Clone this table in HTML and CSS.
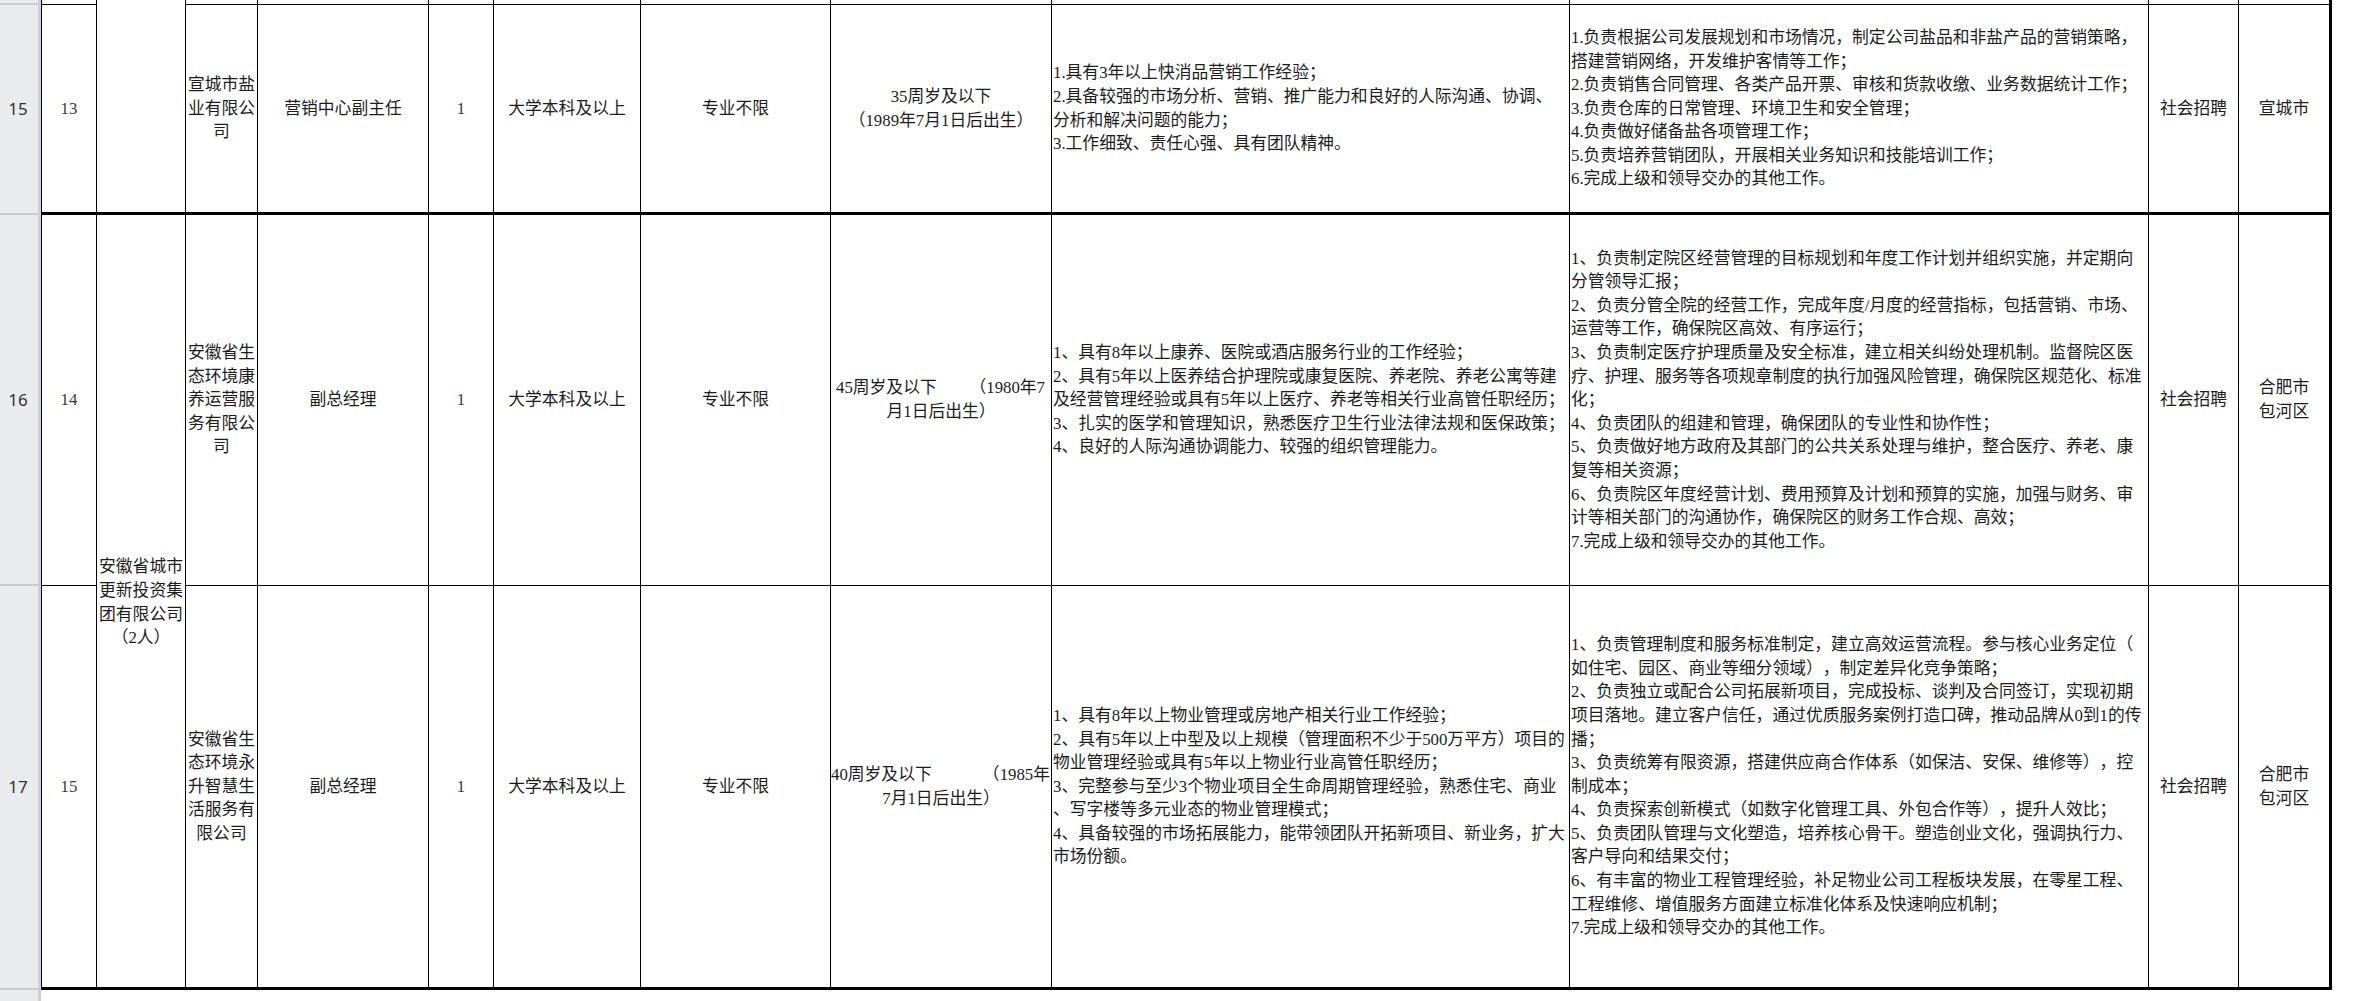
FILE: index.html
```html
<!DOCTYPE html>
<html lang="zh-CN">
<head>
<meta charset="utf-8">
<title>招聘岗位表</title>
<link rel="stylesheet" href="styles.css">
</head>
<body>
<div class="sheet">
  <!-- tail of previous row -->
  <div class="rh"></div>
  <div class="c first"></div>
  <div class="c merged-top thick"></div>
  <div class="c"></div>
  <div class="c"></div>
  <div class="c"></div>
  <div class="c"></div>
  <div class="c"></div>
  <div class="c"></div>
  <div class="c"></div>
  <div class="c"></div>
  <div class="c"></div>
  <div class="c last"></div>
  <div class="pad"></div>

  <!-- row 15 -->
  <div class="rh">15</div>
  <div class="c first thick num">13</div>
  <div class="c thick"><div>宣城市盐</div><div>业有限公</div><div>司</div></div>
  <div class="c thick">营销中心副主任</div>
  <div class="c thick num">1</div>
  <div class="c thick">大学本科及以上</div>
  <div class="c thick">专业不限</div>
  <div class="c thick"><div class="ln">35周岁及以下</div><div class="ln">（1989年7月1日后出生）</div></div>
  <div class="c thick left">
    <div class="ln">1.具有3年以上快消品营销工作经验；</div>
    <div class="ln">2.具备较强的市场分析、营销、推广能力和良好的人际沟通、协调、</div>
    <div class="ln">分析和解决问题的能力；</div>
    <div class="ln">3.工作细致、责任心强、具有团队精神。</div>
  </div>
  <div class="c thick left">
    <div class="ln">1.负责根据公司发展规划和市场情况，制定公司盐品和非盐产品的营销策略，</div>
    <div class="ln">搭建营销网络，开发维护客情等工作；</div>
    <div class="ln">2.负责销售合同管理、各类产品开票、审核和货款收缴、业务数据统计工作；</div>
    <div class="ln">3.负责仓库的日常管理、环境卫生和安全管理；</div>
    <div class="ln">4.负责做好储备盐各项管理工作；</div>
    <div class="ln">5.负责培养营销团队，开展相关业务知识和技能培训工作；</div>
    <div class="ln">6.完成上级和领导交办的其他工作。</div>
  </div>
  <div class="c thick">社会招聘</div>
  <div class="c thick last">宣城市</div>
  <div class="pad"></div>

  <!-- row 16 -->
  <div class="rh">16</div>
  <div class="c first num">14</div>
  <div class="c group thick"><div>安徽省城市</div><div>更新投资集</div><div>团有限公司</div><div>（2人）</div></div>
  <div class="c"><div>安徽省生</div><div>态环境康</div><div>养运营服</div><div>务有限公</div><div>司</div></div>
  <div class="c">副总经理</div>
  <div class="c num">1</div>
  <div class="c">大学本科及以上</div>
  <div class="c">专业不限</div>
  <div class="c age age-a"><div class="split"><span>45周岁及以下</span><span>（1980年7</span></div><div class="ln">月1日后出生）</div></div>
  <div class="c left">
    <div class="ln">1、具有8年以上康养、医院或酒店服务行业的工作经验；</div>
    <div class="ln">2、具有5年以上医养结合护理院或康复医院、养老院、养老公寓等建</div>
    <div class="ln">及经营管理经验或具有5年以上医疗、养老等相关行业高管任职经历；</div>
    <div class="ln">3、扎实的医学和管理知识，熟悉医疗卫生行业法律法规和医保政策；</div>
    <div class="ln">4、良好的人际沟通协调能力、较强的组织管理能力。</div>
  </div>
  <div class="c left">
    <div class="ln">1、负责制定院区经营管理的目标规划和年度工作计划并组织实施，并定期向</div>
    <div class="ln">分管领导汇报；</div>
    <div class="ln">2、负责分管全院的经营工作，完成年度/月度的经营指标，包括营销、市场、</div>
    <div class="ln">运营等工作，确保院区高效、有序运行；</div>
    <div class="ln">3、负责制定医疗护理质量及安全标准，建立相关纠纷处理机制。监督院区医</div>
    <div class="ln">疗、护理、服务等各项规章制度的执行加强风险管理，确保院区规范化、标准</div>
    <div class="ln">化；</div>
    <div class="ln">4、负责团队的组建和管理，确保团队的专业性和协作性；</div>
    <div class="ln">5、负责做好地方政府及其部门的公共关系处理与维护，整合医疗、养老、康</div>
    <div class="ln">复等相关资源；</div>
    <div class="ln">6、负责院区年度经营计划、费用预算及计划和预算的实施，加强与财务、审</div>
    <div class="ln">计等相关部门的沟通协作，确保院区的财务工作合规、高效；</div>
    <div class="ln">7.完成上级和领导交办的其他工作。</div>
  </div>
  <div class="c">社会招聘</div>
  <div class="c last"><div>合肥市</div><div>包河区</div></div>
  <div class="pad"></div>

  <!-- row 17 -->
  <div class="rh">17</div>
  <div class="c first thick num">15</div>
  <div class="c thick"><div>安徽省生</div><div>态环境永</div><div>升智慧生</div><div>活服务有</div><div>限公司</div></div>
  <div class="c thick">副总经理</div>
  <div class="c thick num">1</div>
  <div class="c thick">大学本科及以上</div>
  <div class="c thick">专业不限</div>
  <div class="c thick age age-b"><div class="split"><span>40周岁及以下</span><span>（1985年</span></div><div class="ln">7月1日后出生）</div></div>
  <div class="c thick left">
    <div class="ln">1、具有8年以上物业管理或房地产相关行业工作经验；</div>
    <div class="ln">2、具有5年以上中型及以上规模（管理面积不少于500万平方）项目的</div>
    <div class="ln">物业管理经验或具有5年以上物业行业高管任职经历；</div>
    <div class="ln">3、完整参与至少3个物业项目全生命周期管理经验，熟悉住宅、商业</div>
    <div class="ln">、写字楼等多元业态的物业管理模式；</div>
    <div class="ln">4、具备较强的市场拓展能力，能带领团队开拓新项目、新业务，扩大</div>
    <div class="ln">市场份额。</div>
  </div>
  <div class="c thick left">
    <div class="ln">1、负责管理制度和服务标准制定，建立高效运营流程。参与核心业务定位（</div>
    <div class="ln">如住宅、园区、商业等细分领域），制定差异化竞争策略；</div>
    <div class="ln">2、负责独立或配合公司拓展新项目，完成投标、谈判及合同签订，实现初期</div>
    <div class="ln">项目落地。建立客户信任，通过优质服务案例打造口碑，推动品牌从0到1的传</div>
    <div class="ln">播；</div>
    <div class="ln">3、负责统筹有限资源，搭建供应商合作体系（如保洁、安保、维修等），控</div>
    <div class="ln">制成本；</div>
    <div class="ln">4、负责探索创新模式（如数字化管理工具、外包合作等），提升人效比；</div>
    <div class="ln">5、负责团队管理与文化塑造，培养核心骨干。塑造创业文化，强调执行力、</div>
    <div class="ln">客户导向和结果交付；</div>
    <div class="ln">6、有丰富的物业工程管理经验，补足物业公司工程板块发展，在零星工程、</div>
    <div class="ln">工程维修、增值服务方面建立标准化体系及快速响应机制；</div>
    <div class="ln">7.完成上级和领导交办的其他工作。</div>
  </div>
  <div class="c thick">社会招聘</div>
  <div class="c thick last"><div>合肥市</div><div>包河区</div></div>
  <div class="pad"></div>

  <!-- next row stub -->
  <div class="rh rh-end"></div>
  <div class="foot"></div>
</div>
</body>
</html>
```

FILE: styles.css
```css
html, body {
  margin: 0;
  padding: 0;
  background: #ffffff;
}

body {
  width: 2367px;
  height: 1001px;
  overflow: hidden;
}

.sheet {
  display: grid;
  grid-template-columns: 41px 56px 89px 72px 171px 65px 147px 190px 221px 518px 579px 90px 93px 1fr;
  grid-template-rows: 5px 210px 371px 404px 11px;
  font-family: "Liberation Serif", "Noto Sans CJK SC", serif;
  font-size: 16.8px;
  line-height: 23.6px;
  color: #1c1c1c;
  text-spacing-trim: space-all;
}

.rh {
  box-sizing: border-box;
  background: #e9ebef;
  border-right: 3px solid #cdd0d6;
  border-bottom: 2px solid #c8cbd0;
  display: flex;
  align-items: center;
  justify-content: center;
  font-family: "Noto Sans", "Liberation Sans", sans-serif;
  font-size: 17px;
  color: #333333;
  padding-right: 2px;
}

.rh-end {
  border-bottom: none;
}

.c {
  box-sizing: border-box;
  border-right: 1px solid #000;
  border-bottom: 1px solid #000;
  display: flex;
  flex-direction: column;
  justify-content: center;
  align-items: center;
  text-align: center;
  overflow: hidden;
  min-width: 0;
}

.first {
  border-left: 1px solid #000;
}

.thick {
  border-bottom-width: 3px;
}

.last {
  border-right-width: 3px;
}

.merged-top {
  grid-row: span 2;
}

.group {
  grid-row: span 2;
  padding-top: 3px;
}

.num {
  color: #3a3a3a;
}

.left {
  align-items: flex-start;
  text-align: left;
  padding-left: 1px;
}

.ln {
  white-space: nowrap;
}

.age {
  align-items: stretch;
}

.age .ln {
  text-align: center;
}

.split {
  display: flex;
  justify-content: space-between;
  white-space: nowrap;
}

.age-a .split {
  padding: 0 6px 0 5px;
}

.age-b .split {
  padding: 0 1px 0 0;
}

.pad {
  background: #ffffff;
}

.foot {
  grid-column: span 13;
  background: #ffffff;
}
```
